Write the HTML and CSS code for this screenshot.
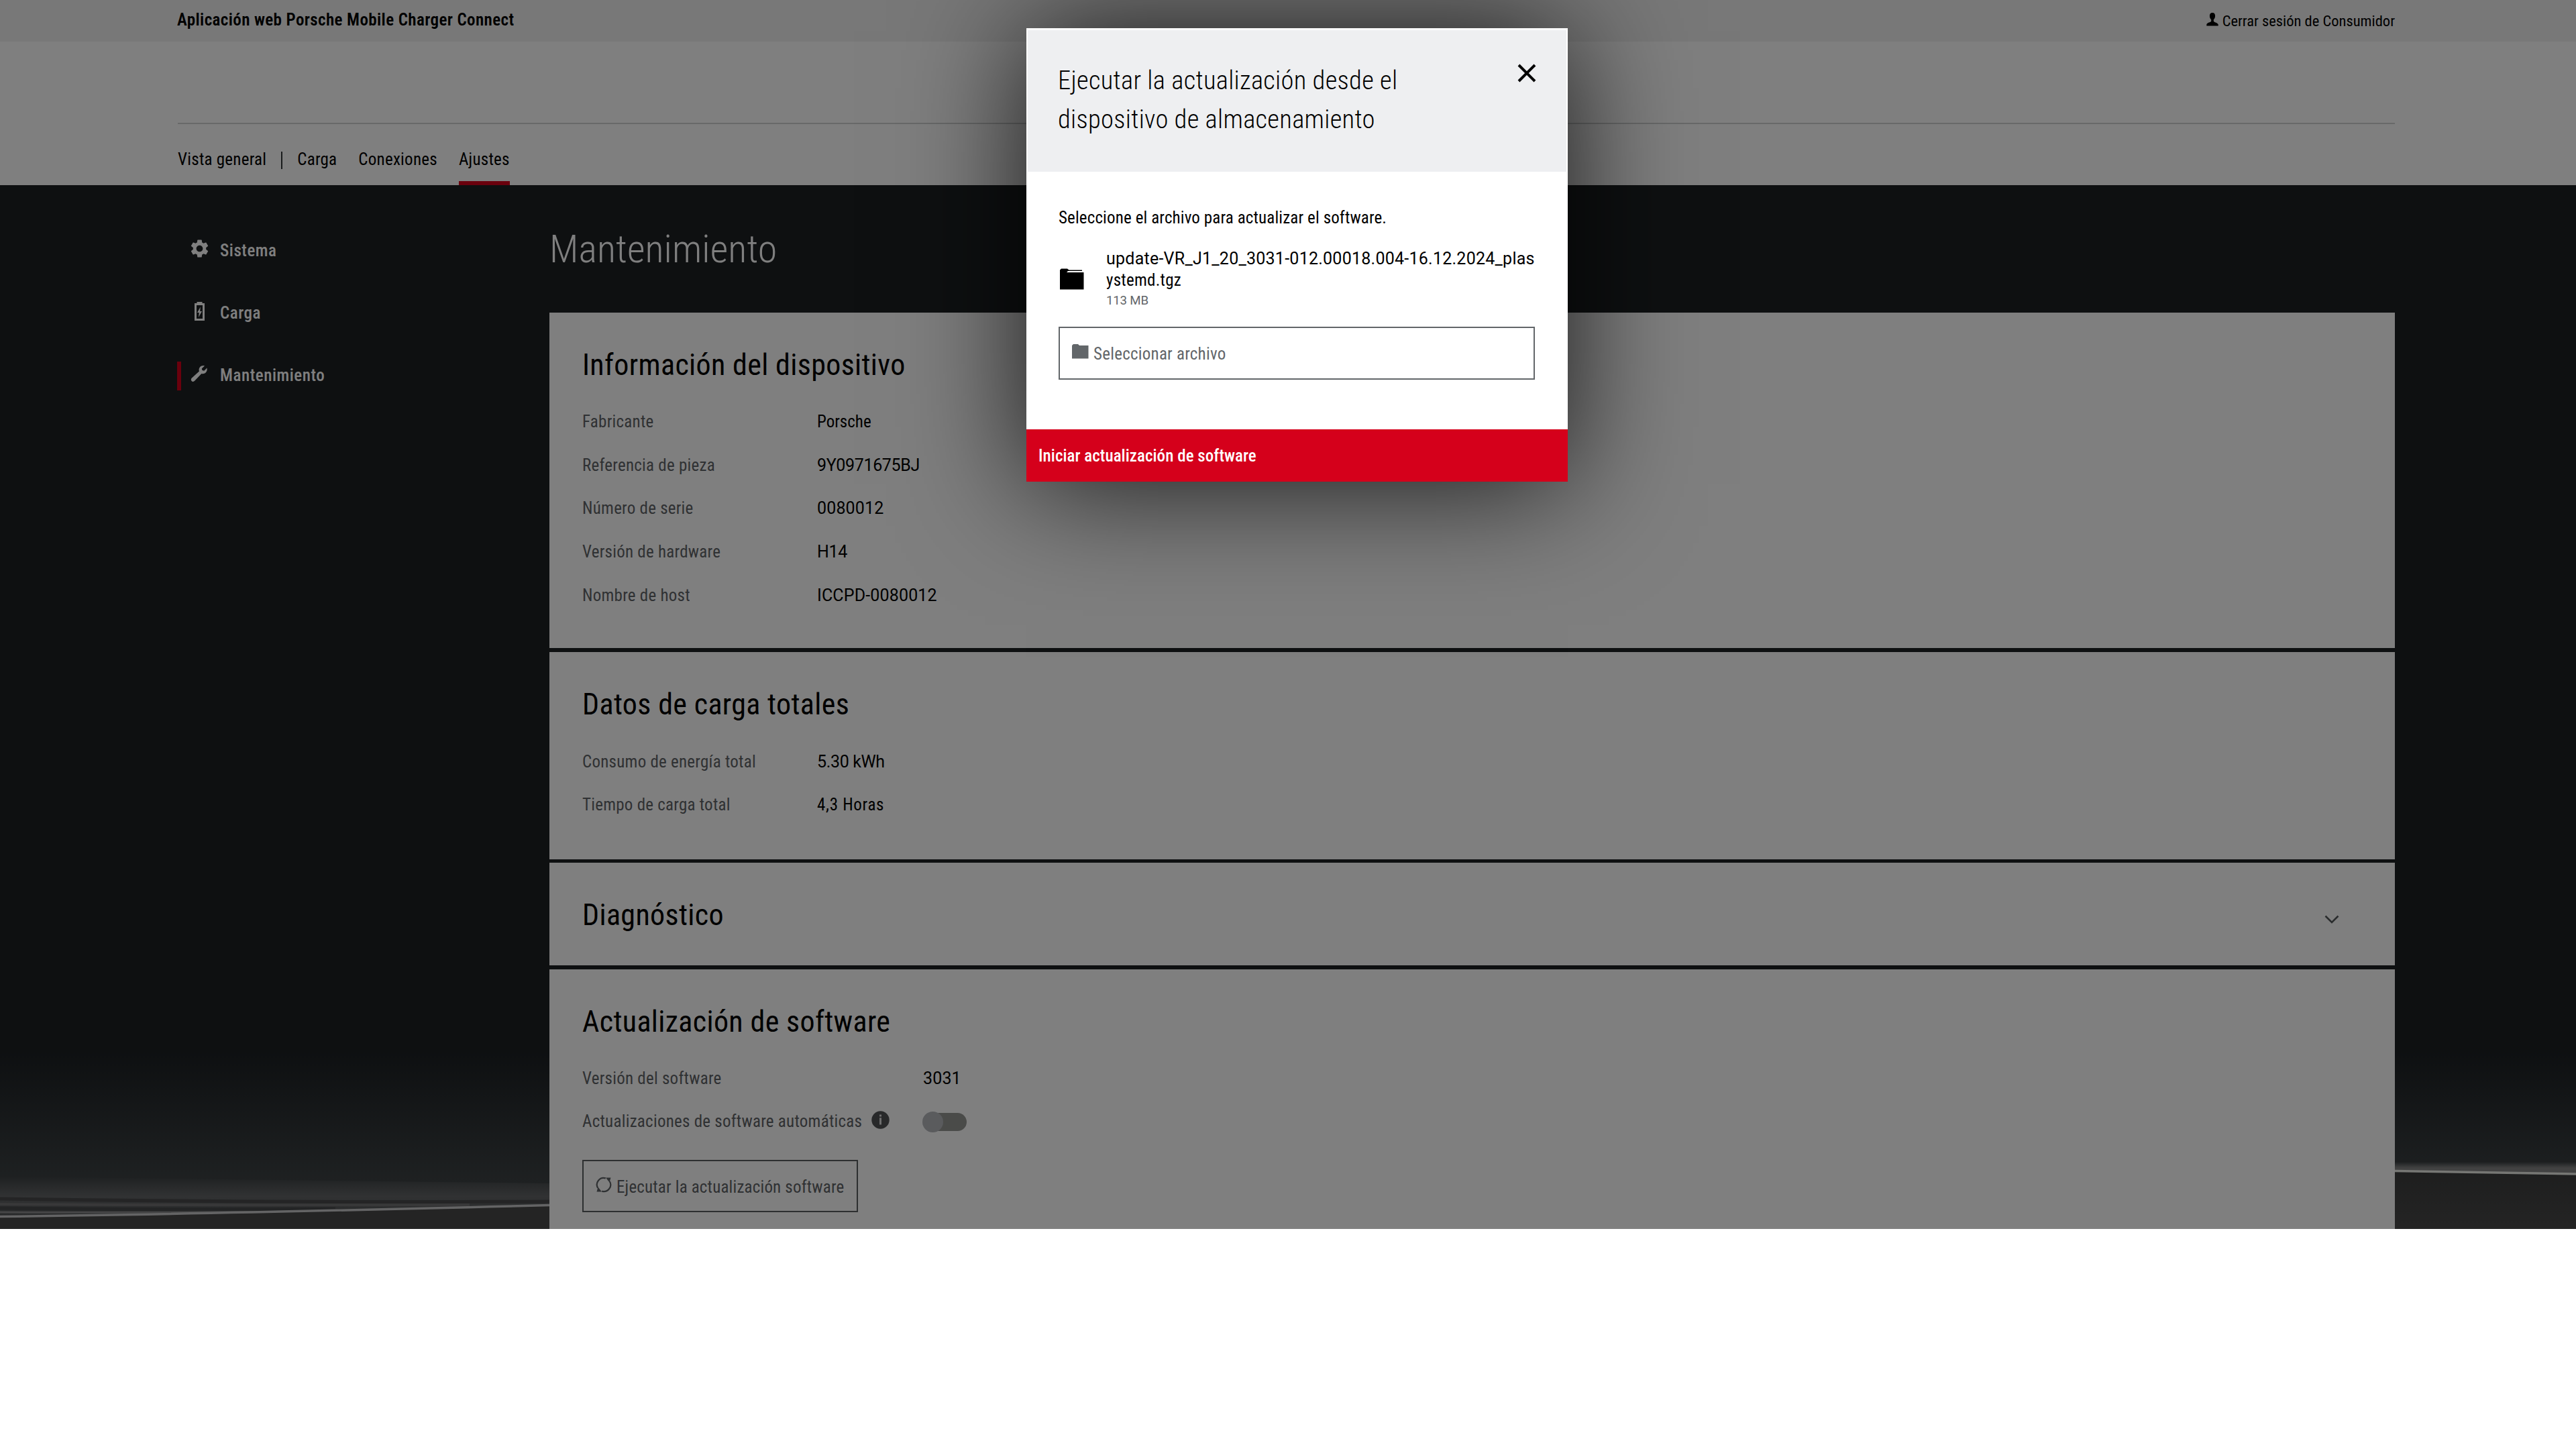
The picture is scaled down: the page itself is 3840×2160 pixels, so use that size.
FILE: index.html
```html
<!DOCTYPE html>
<html lang="es">
<head>
<meta charset="utf-8">
<title>Aplicación web Porsche Mobile Charger Connect</title>
<link rel="stylesheet" href="styles.css">
</head>
<body>
<div class="app">
  <div class="topbar">
    <span class="app-title">Aplicación web Porsche Mobile Charger Connect</span>
    <a class="logout">
      <svg width="18" height="20" viewBox="0 0 18 20"><path d="M9 0C6.2 0 4.9 2 4.9 4.8c0 2.6 1 4.300 2.300 5.400v2.300C6.500 14.600 1.200 14.300.3 17.600V19.500h17.400v-1.900c-.9-3.300-6.200-3-6.900-5.100v-2.300c1.300-1.100 2.300-2.800 2.300-5.400C13.100 2 11.800 0 9 0z"/></svg>
      <span>Cerrar sesión de Consumidor</span>
    </a>
  </div>
  <header class="header">
    <div class="brand"></div>
    <nav class="nav">
      <a class="nav-item">Vista general</a>
      <span class="nav-sep"></span>
      <a class="nav-item">Carga</a>
      <a class="nav-item">Conexiones</a>
      <a class="nav-item active">Ajustes</a>
    </nav>
  </header>

  <div class="page">
    <svg class="backdrop" viewBox="0 0 3840 1556" preserveAspectRatio="none">
      <defs>
        <linearGradient id="sky" x1="0" y1="0" x2="0" y2="1">
          <stop offset="0" stop-color="#1c2023"/>
          <stop offset=".83" stop-color="#1c2023"/>
          <stop offset=".95" stop-color="#3c4143"/>
          <stop offset="1" stop-color="#46484a"/>
        </linearGradient>
        <linearGradient id="haze" x1="0" y1="0" x2="0" y2="1">
          <stop offset="0" stop-color="#6a6c6e" stop-opacity="0"/>
          <stop offset=".5" stop-color="#66686a" stop-opacity=".9"/>
          <stop offset="1" stop-color="#5c5e60" stop-opacity=".5"/>
        </linearGradient>
        <linearGradient id="hazeRight" x1="0" y1="0" x2="0" y2="1">
          <stop offset="0" stop-color="#8c8c8c" stop-opacity="0"/>
          <stop offset=".5" stop-color="#8c8c8c" stop-opacity=".9"/>
          <stop offset="1" stop-color="#8c8c8c" stop-opacity=".9"/>
        </linearGradient>
        <linearGradient id="floor" x1="0" y1="0" x2="0" y2="1">
          <stop offset="0" stop-color="#3c3d3d"/>
          <stop offset="1" stop-color="#494949"/>
        </linearGradient>
      </defs>
      <rect width="3840" height="1556" fill="url(#sky)"/>
      <path d="M0 1478L820 1488V1524L0 1538Z" fill="url(#haze)"/>
      <path d="M0 1511Q400 1517 820 1515" stroke="#48494a" stroke-width="5" fill="none"/>
      <path d="M0 1519Q300 1521 700 1520" stroke="#707172" stroke-width="4" fill="none"/>
      <path d="M0 1525Q250 1528 500 1526" stroke="#46484a" stroke-width="5" fill="none"/>
      <path d="M0 1531Q250 1532 450 1530" stroke="#8a8b8c" stroke-width="3" fill="none"/>
      <path d="M0 1538Q300 1535 820 1521V1556H0Z" fill="#484848"/>
      <path d="M0 1537.500Q300 1534 820 1520.500" stroke="#c8c9ca" stroke-width="3.500" fill="none"/>
      <path d="M3570 1456H3840V1474L3570 1470Z" fill="url(#hazeRight)"/>
      <path d="M3570 1470L3840 1474V1556H3570Z" fill="url(#floor)"/>
      <path d="M3570 1469.500L3840 1474" stroke="#eceee8" stroke-width="3.500" fill="none"/>
    </svg>

    <aside class="sidebar">
      <a class="side-item">
        <svg width="27" height="27" viewBox="2 2 20 20"><path d="M19.140 12.940c.04-.3.060-.61.060-.94 0-.32-.02-.64-.07-.94l2.030-1.580c.18-.14.230-.41.120-.61l-1.920-3.320c-.12-.22-.37-.29-.59-.22l-2.390.96c-.5-.38-1.030-.7-1.620-.94l-.36-2.540c-.04-.24-.24-.41-.48-.41h-3.840c-.24 0-.43.17-.47.41l-.36 2.540c-.59.24-1.130.57-1.620.94l-2.390-.96c-.22-.08-.47 0-.59.22L2.740 8.870c-.12.21-.08.470.12.610l2.030 1.580c-.05.300-.09.630-.09.940s.02.640.07.940l-2.030 1.580c-.18.14-.23.410-.12.610l1.920 3.320c.12.220.37.290.59.220l2.390-.96c.5.380 1.030.700 1.620.940l.36 2.540c.05.240.24.410.48.410h3.840c.24 0 .44-.17.470-.41l.36-2.540c.59-.24 1.130-.56 1.620-.94l2.390.96c.22.080.47 0 .59-.22l1.920-3.320c.12-.22.070-.47-.12-.61l-2.010-1.580zM12 15.600c-1.980 0-3.600-1.620-3.600-3.600s1.620-3.600 3.600-3.600 3.600 1.620 3.600 3.600-1.620 3.600-3.600 3.600z"/></svg>
        <span>Sistema</span>
      </a>
      <a class="side-item">
        <svg width="27" height="28" viewBox="0 0 27 28"><path fill-rule="evenodd" d="M9.500 0h8v2H21v26H6V2h3.500zM9 5v20h9V5zM14.800 7.500L10 16h2.800l-.8 7 5-9h-2.800z"/></svg>
        <span>Carga</span>
      </a>
      <a class="side-item current">
        <svg width="27" height="27" viewBox="0 0 27 27"><path d="M24.500 4.600l-4.300 4.200-2.700-.7-.7-2.700L21 1.200C18.400.6 15.600 1.200 14 3.200c-1.500 1.800-1.800 4-1.100 6.200L1.900 19.600c-1.400 1.400-1.400 3.200-.2 4.400 1.200 1.200 3.100 1.200 4.400-.2L16.400 12.900c2.200.7 4.500.3 6.200-1.300 1.900-1.800 2.500-4.500 1.900-7z"/></svg>
        <span>Mantenimiento</span>
      </a>
    </aside>

    <main class="content">
      <h1>Mantenimiento</h1>
      <section class="card device">
        <h2>Información del dispositivo</h2>
        <div class="row"><span class="label">Fabricante</span><span class="value">Porsche</span></div>
        <div class="row"><span class="label">Referencia de pieza</span><span class="value mixed">9Y0971675BJ</span></div>
        <div class="row"><span class="label">Número de serie</span><span class="value digits">0080012</span></div>
        <div class="row"><span class="label">Versión de hardware</span><span class="value mixed">H14</span></div>
        <div class="row"><span class="label">Nombre de host</span><span class="value digits">ICCPD-0080012</span></div>
      </section>
      <section class="card totals">
        <h2>Datos de carga totales</h2>
        <div class="row"><span class="label">Consumo de energía total</span><span class="value mixed">5.30 kWh</span></div>
        <div class="row"><span class="label">Tiempo de carga total</span><span class="value hours">4,3 Horas</span></div>
      </section>
      <section class="card diagnosis">
        <h2>Diagnóstico</h2>
        <svg class="chevron" width="22" height="14" viewBox="0 0 22 14"><path d="M1.500 1.500L11 11l9.500-9.500" fill="none" stroke="#55585a" stroke-width="2.600"/></svg>
      </section>
      <section class="card update">
        <h2>Actualización de software</h2>
        <div class="row"><span class="label">Versión del software</span><span class="value digits">3031</span></div>
        <div class="row">
          <span class="label">Actualizaciones de software automáticas
            <svg class="info" width="27" height="27" viewBox="0 0 27 27"><circle cx="13.500" cy="13.500" r="13.200" fill="#505355"/><path d="M12 5.500h3v3h-3zM12 10.200h3v10.300h-3z" fill="#dcdcdc"/></svg>
          </span>
          <span class="toggle"><i></i></span>
        </div>
        <button class="outline-btn">
          <svg width="24" height="24" viewBox="0 0 24 24" fill="none" stroke="#5f6366" stroke-width="2.200"><path d="M14.800 2.400A10 10 0 0 0 3.200 17M9.200 21.600A10 10 0 0 0 20.800 7"/><path d="M15 1.500h7.500l-2 7zM9 22.500H1.500l2-7z" fill="#5f6366" stroke="none"/></svg>
          <span>Ejecutar la actualización software</span>
        </button>
      </section>
    </main>
  </div>

  <div class="overlay">
    <div class="modal">
      <div class="modal-head">
        <h3>Ejecutar la actualización desde el<br>dispositivo de almacenamiento</h3>
        <svg class="close" width="28" height="28" viewBox="0 0 28 28"><path d="M2 2l24 24M26 2L2 26" stroke="#000" stroke-width="4"/></svg>
      </div>
      <div class="modal-body">
        <p class="hint">Seleccione el archivo para actualizar el software.</p>
        <div class="file">
          <svg width="36" height="32" viewBox="0 0 36 32"><path d="M0 2.500L2 .5h9l2.500 2H33v1.500H12L10 6h25.500v25.500H0z"/></svg>
          <div>
            <div class="file-name">update-VR_J1_20_3031-012.00018.004-16.12.2024_plas</div>
            <div class="file-name tail">ystemd.tgz</div>
            <div class="file-size">113 MB</div>
          </div>
        </div>
        <button class="picker">
          <svg width="25" height="22" viewBox="0 0 25 22"><path d="M0 2L2 0h7l2 2h13.500v19.500H0z" fill="#626669"/></svg>
          <span>Seleccionar archivo</span>
        </button>
      </div>
      <button class="start">Iniciar actualización de software</button>
    </div>
  </div>
</div>
</body>
</html>
```
FILE: styles.css
```css
* { box-sizing: border-box; }

body {
  margin: 0;
  background: #fff;
  color: #000;
  font-family: Roboto, "Liberation Sans", sans-serif;
  font-size: 25px;
  font-stretch: 87.5%;
  letter-spacing: .25px;
  line-height: 32px;
}

h1, h2, h3, p { margin: 0; font-weight: 400; }
svg { display: block; flex: none; }
button { font: inherit; font-stretch: inherit; letter-spacing: inherit; cursor: pointer; }

.app {
  position: relative;
  height: 1832px;
  overflow: hidden;
}

/* Top bar and header */
.topbar {
  display: flex;
  justify-content: space-between;
  align-items: center;
  height: 62px;
  padding: 0 270px 2px 264px;
  background: #f0f0f0;
}
.app-title { font-weight: 600; letter-spacing: .4px; }
.logout {
  display: flex;
  align-items: center;
  gap: 6px;
  font-size: 22.5px;
  letter-spacing: 0;
}
.logout svg { margin-bottom: 3px; }
.logout span { padding-top: 1px; }
.header {
  height: 214px;
  padding: 0 270px 0 265px;
  background: #fff;
}
.brand { height: 123px; border-bottom: 2px solid #d0d2d3; }
.nav { display: flex; height: 91px; }
.nav-item { padding-top: 37px; margin-right: 32px; }
.nav-item:first-child { margin-right: 22px; }
.nav-item.active { border-bottom: 6px solid #d5001b; margin-right: 0; }
.nav-sep { width: 2px; height: 26px; margin: 41px 22px 0 0; background: #323639; }

/* Page */
.page {
  position: relative;
  display: flex;
  height: 1556px;
}
.backdrop {
  position: absolute;
  inset: 0;
  width: 100%;
  height: 100%;
}
.sidebar {
  position: relative;
  display: flex;
  flex-direction: column;
  gap: 50.4px;
  width: 555px;
  margin-left: 264px;
  padding-top: 76px;
  color: #fff;
  font-weight: 500;
  letter-spacing: .55px;
}
.side-item {
  display: flex;
  align-items: center;
  gap: 17px;
  height: 43px;
  padding-left: 14px;
  border-left: 6px solid transparent;
}
.side-item svg { fill: #fff; margin-bottom: 6px; }
.side-item.current { border-color: #d5001b; }

.content {
  position: relative;
  flex: none;
  width: 2751px;
}
h1 {
  margin: 60px 0 59.5px;
  color: #fff;
  font-size: 58px;
  font-weight: 300;
  letter-spacing: .1px;
  line-height: 70px;
}
.card {
  padding: 50px 49px 0;
  background: #fff;
}
.device { height: 500.5px; margin-bottom: 6px; }
.totals { height: 309px; margin-bottom: 4.5px; }
.diagnosis {
  display: flex;
  justify-content: space-between;
  height: 153px;
  margin-bottom: 6px;
}
.update { height: 520px; }
h2 {
  font-size: 44px;
  letter-spacing: .35px;
  line-height: 56px;
  margin-bottom: 25px;
}
.chevron { margin: 28px 34px 0 0; }
.row {
  display: flex;
  align-items: center;
  height: 64.6px;
}
.label, .value { padding-top: 1px; }
.label { width: 350px; color: #5f6366; }
.update .label { display: flex; gap: 14px; width: 508px; white-space: nowrap; }
.info { margin-bottom: 6px; }
.value { letter-spacing: 0; }
.value.mixed { font-stretch: 100%; letter-spacing: -.35px; }
.value.digits { font-stretch: 100%; letter-spacing: .15px; }
.value.hours { letter-spacing: .7px; }
.toggle {
  width: 56px;
  height: 27px;
  margin: 0 0 0 9px;
  border-radius: 14px;
  background: #959693;
}
.toggle i {
  display: block;
  width: 31px;
  height: 31px;
  margin: -2px 0 0 -10px;
  border-radius: 50%;
  background: #b4b6ba;
}
.outline-btn {
  display: flex;
  align-items: center;
  gap: 7px;
  width: 411px;
  height: 78px;
  margin-top: 24.5px;
  padding: 0 18px;
  border: 2px solid #5a5e61;
  background: none;
  color: #5f6366;
  letter-spacing: .18px;
  white-space: nowrap;
}
.outline-btn svg { margin-bottom: 5px; }
.outline-btn span { padding-top: 3px; }

/* Dialog */
.overlay {
  position: absolute;
  inset: 0;
  background: rgba(0, 0, 0, .5);
}
.modal {
  position: absolute;
  left: 1530px;
  top: 42px;
  width: 807px;
  height: 676px;
  display: flex;
  flex-direction: column;
  background: #fff;
  box-shadow: 0 4px 172px rgba(0, 0, 0, .8);
}
.modal-head {
  display: flex;
  justify-content: space-between;
  height: 211px;
  margin: 3px 2px 0;
  padding: 46px 45px 0;
  background: #eeeff1;
}
h3 {
  font-size: 38.5px;
  font-weight: 300;
  letter-spacing: .3px;
  line-height: 58.4px;
}
.close { margin-top: 4px; }
.modal-body {
  flex: 1;
  padding: 52.5px 49px 0 48px;
}
.hint { letter-spacing: .14px; }
.file {
  display: flex;
  align-items: center;
  gap: 33px;
  margin-top: 29px;
  padding-left: 2px;
}
.file-name {
  font-stretch: 100%;
  letter-spacing: .25px;
  line-height: 32.4px;
  white-space: nowrap;
}
.file-name.tail { font-stretch: 87.5%; }
.file-size {
  color: #626669;
  font-size: 18.7px;
  font-stretch: 100%;
  letter-spacing: -.2px;
  line-height: 28px;
}
.picker {
  display: flex;
  align-items: center;
  gap: 7px;
  width: 100%;
  height: 79px;
  margin-top: 25px;
  padding: 0 18px;
  border: 2px solid #626669;
  background: #fff;
  color: #626669;
}
.picker svg { margin-bottom: 5px; }
.picker span { padding-top: 3px; }
.start {
  height: 78px;
  padding: 2px 18px 0;
  border: 0;
  background: #d5001b;
  color: #fff;
  font-weight: 500;
  letter-spacing: .05px;
  text-align: left;
}
```
